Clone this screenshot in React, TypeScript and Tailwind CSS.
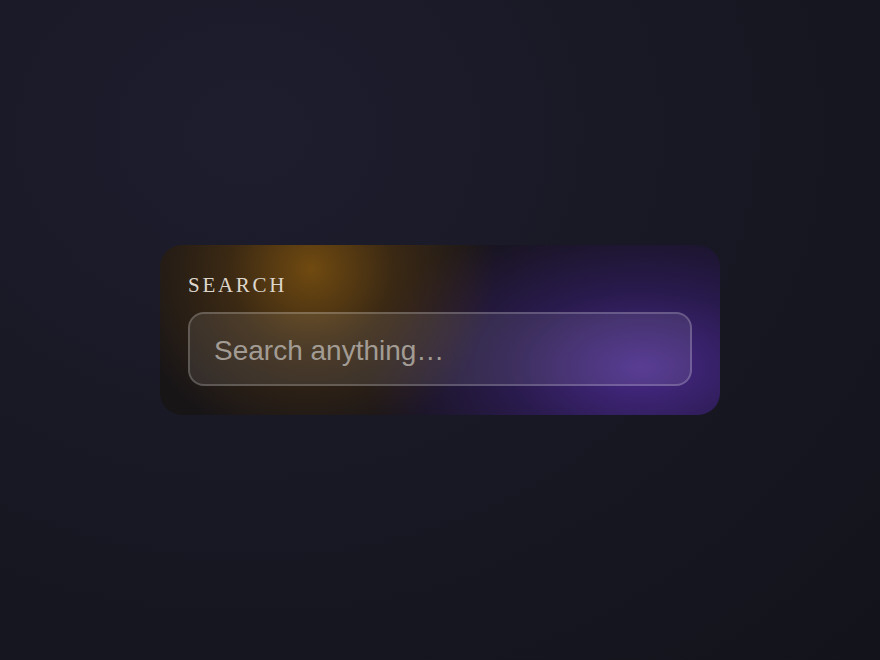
export default function App() {
  return (
    <div className="flex h-[660px] w-full items-center justify-center bg-[radial-gradient(ellipse_at_28%_20%,#1e1d2e_0%,#181824_50%,#13131b_100%)]">
      <div className="flex w-[560px] flex-col gap-[14px] rounded-[22px] bg-[#161419] bg-[radial-gradient(ellipse_185px_180px_at_27%_14%,rgba(112,74,16,1),rgba(82,54,16,0.6)_45%,transparent_100%),radial-gradient(ellipse_280px_160px_at_86%_72%,rgba(76,43,144,0.95),rgba(54,31,110,0.6)_48%,transparent_100%),linear-gradient(90deg,#181517,#14121c)] px-7 pb-[29px] pt-[28px]">
        <label
          htmlFor="search"
          className="text-[21px] leading-[25px] tracking-[0.13em] text-[#ddd6cc] [font-family:'Liberation_Serif',serif]"
        >
          SEARCH
        </label>
        <input
          id="search"
          type="text"
          placeholder="Search anything…"
          className="h-[74px] w-full rounded-[16px] border-2 border-white/20 bg-white/[0.09] px-6 pt-[3px] text-[28px] text-[#e5e0d8] outline-none placeholder:text-[#a29c94] [font-family:'Liberation_Sans',sans-serif]"
        />
      </div>
    </div>
  );
}
